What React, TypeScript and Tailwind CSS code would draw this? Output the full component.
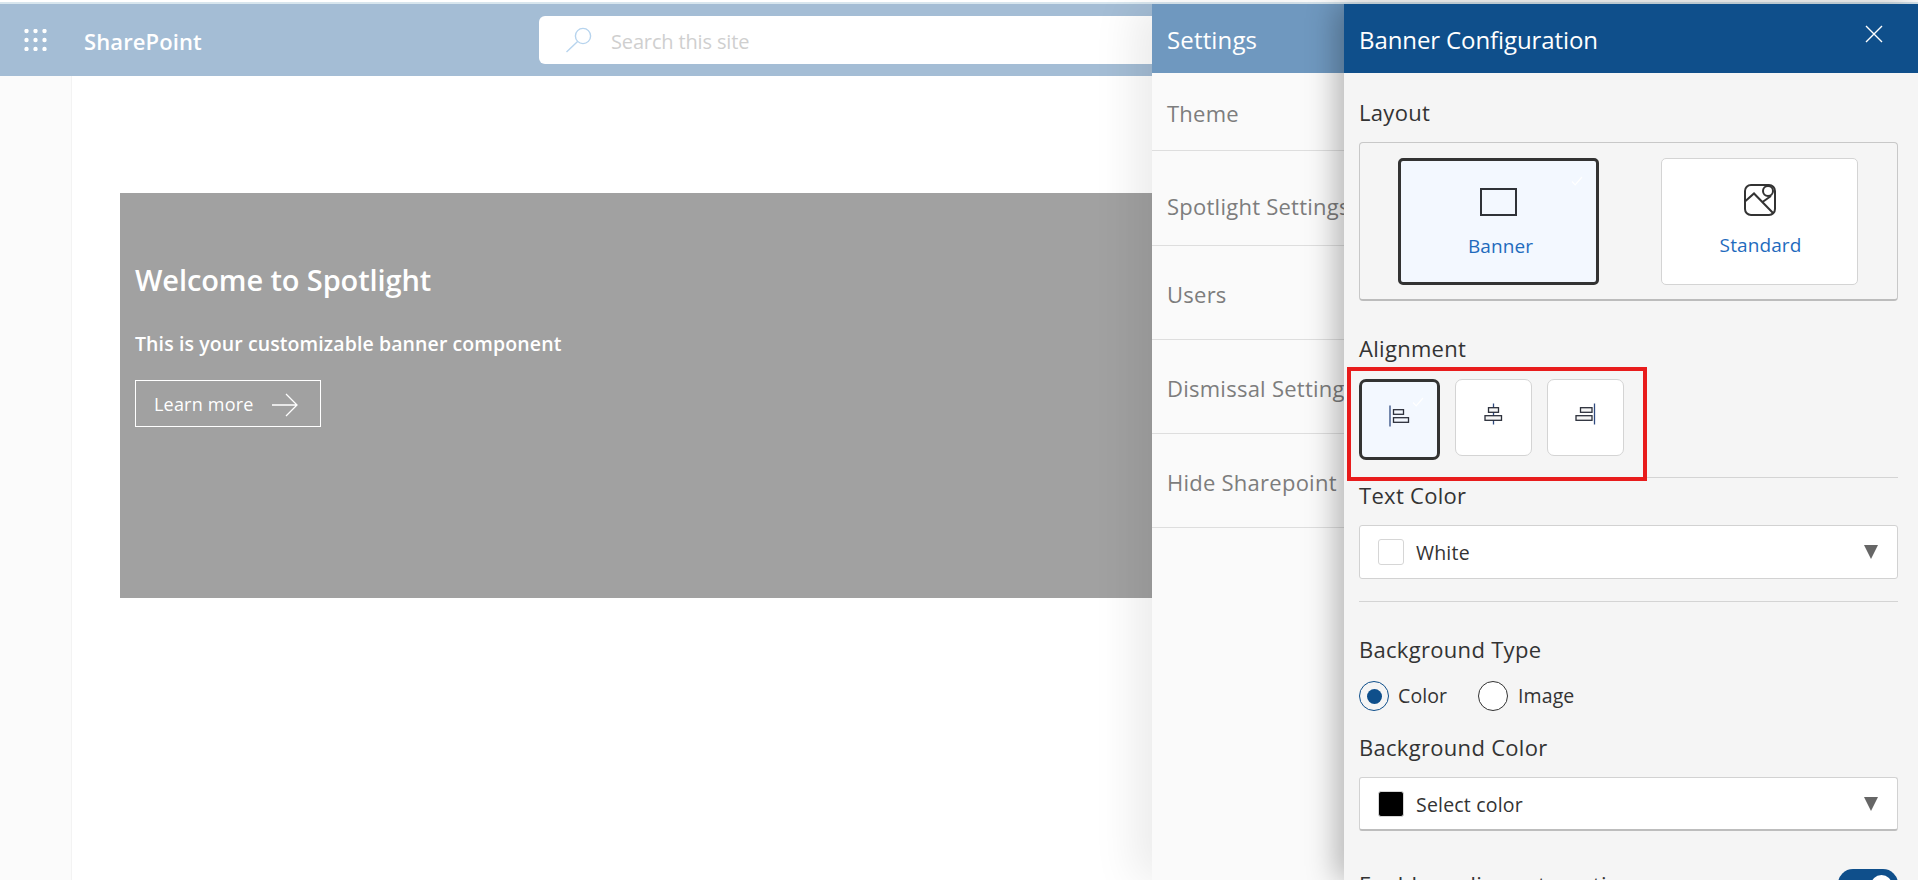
const font = "font-['Open_Sans','Noto_Sans',sans-serif]";

const settingsItems = [
  { label: "Theme", cls: "h-[78px] pt-[4px]" },
  { label: "Spotlight Settings", cls: "h-[95px] pt-[17px]" },
  { label: "Users", cls: "h-[94px] pt-[4px]" },
  { label: "Dismissal Settings", cls: "h-[94px] pt-[4px]" },
  { label: "Hide Sharepoint", cls: "h-[94px] pt-[4px]" },
];

function WaffleIcon() {
  const dots = [2, 11, 20];
  return (
    <svg width="23" height="22" viewBox="0 0 23 22" className="fill-white">
      {dots.map((y) =>
        [2.5, 11.5, 20.5].map((x) => <circle key={`${x}-${y}`} cx={x} cy={y} r="2.2" />)
      )}
    </svg>
  );
}

function SearchIcon() {
  return (
    <svg width="28" height="26" viewBox="0 0 28 26" fill="none" className="stroke-[#b7d4ee]" strokeWidth="1.4">
      <circle cx="18" cy="9" r="7.6" />
      <path d="M12.6 14.6 1.5 25" />
    </svg>
  );
}

function BannerIcon() {
  return <div className="w-[37px] h-[28px] border-2 border-[#2f3238]" />;
}

function StandardIcon() {
  return (
    <svg width="32" height="32" viewBox="0 0 32 32" fill="none" stroke="#333" strokeWidth="2">
      <rect x="1" y="1" width="30" height="30" rx="6" />
      <circle cx="24" cy="7" r="5" />
      <path d="M1.5 17 10 9.5 29 29" />
      <path d="M18.5 18 27 12" />
    </svg>
  );
}

function Check() {
  return (
    <svg width="12" height="10" viewBox="0 0 12 10" fill="none" stroke="#fff" strokeWidth="1.2" className="block">
      <path d="M1 5.5 4.2 8.8 11 1" />
    </svg>
  );
}

function AlignIcon({ variant }: { variant: "left" | "center" | "right" }) {
  const shape =
    variant === "left"
      ? { line: 1, a: [4.5, 10], b: [4.5, 15] }
      : variant === "center"
        ? { line: 10.5, a: [5.5, 10], b: [2, 16.5] }
        : { line: 19.5, a: [5.5, 11.5], b: [1, 16] };
  const fill = variant === "left" ? "#f3f8ff" : "#f6f6f6";
  return (
    <svg width="22" height="22" viewBox="0 0 22 22" fill="none" stroke="#2b2f3a" strokeWidth="1.3" className="mb-[8px]">
      <path d={`M${shape.line} 0.5v21`} stroke="#2f4a80" />
      <rect x={shape.a[0]} y="4.7" width={shape.a[1]} height="4.6" fill={fill} />
      <rect x={shape.b[0]} y="12.7" width={shape.b[1]} height="4.6" fill={fill} />
    </svg>
  );
}

function ColorSelect({ swatch, label, thick }: { swatch: string; label: string; thick?: boolean }) {
  return (
    <div
      className={`h-[54px] bg-white border border-[#d2d2d2] rounded-[3px] flex items-center pl-[18px] pr-[19px] ${
        thick ? "border-b-2 border-b-[#bdbdbd]" : ""
      }`}
    >
      <div className={`w-[26px] h-[26px] rounded-[3px] border border-[#d6d6d6] ${swatch}`} />
      <span className="ml-[12px] pt-[2px] text-[19.5px] text-[#333] flex-1 tracking-[0.2px]">{label}</span>
      <div className="w-0 h-0 border-l-[7px] border-r-[7px] border-t-[14px] border-l-transparent border-r-transparent border-t-[#666]" />
    </div>
  );
}

function PanelLabel({ children, cls }: { children: string; cls: string }) {
  return <div className={`h-[30px] pb-[2px] flex items-center text-[22px] text-[#333] tracking-[0.3px] ${cls}`}>{children}</div>;
}

function ArrowIcon() {
  return (
    <svg width="26" height="24" viewBox="0 0 26 24" fill="none" stroke="#fff" strokeWidth="1.3" className="ml-[18px]">
      <path d="M0 12h25M14 1l11 11-11 11" />
    </svg>
  );
}

export default function App() {
  return (
    <div className={`relative w-full h-[880px] overflow-hidden bg-white ${font}`}>
      <div className="h-[4px] border-t-2 border-[#fff] bg-[#d8e6ee]" />
      <header className="h-[72px] bg-[#a4bdd5] flex items-center">
        <div className="ml-[24px]"><WaffleIcon /></div>
        <span className="ml-[37px] w-[116px] pt-[2px] text-[22px] font-semibold text-white tracking-[0.1px] whitespace-nowrap">SharePoint</span>
        <div className="ml-[339px] flex-1 h-[48px] bg-white rounded-l-[6px] flex items-center pl-[26px]">
          <SearchIcon />
          <span className="ml-[18px] pt-[4px] text-[20px] text-[#cfcfcf] tracking-[-0.15px]">Search this site</span>
        </div>
      </header>

      <div className="flex h-[804px]">
        <aside className="w-[72px] bg-[#fbfbfb] border-r border-[#f3f3f3]" />
        <main className="flex-1 pl-[48px] pt-[117px]">
          <section className="h-[405px] bg-[#a1a1a1] pl-[15px] pt-[68px] text-white">
            <h1 className="text-[29px] leading-[38px] font-semibold tracking-[-0.1px]">Welcome to Spotlight</h1>
            <p className="mt-[32px] text-[19.5px] leading-[26px] font-semibold tracking-[0.1px]">This is your customizable banner component</p>
            <a className="mt-[23px] w-[186px] h-[47px] pt-[2px] border border-white flex items-center pl-[18px] text-[18px] tracking-[0.2px]">
              Learn more
              <ArrowIcon />
            </a>
          </section>
        </main>
      </div>

      <div className="absolute top-[4px] right-0 bottom-0 flex">
        <div className="w-[192px] bg-[#fafafa] shadow-[-18px_0_40px_rgba(0,0,0,0.08)]">
          <div className="h-[69px] pt-[2px] bg-[#6f98bf] flex items-center pl-[15px] text-[24px] text-white tracking-[0.15px]">Settings</div>
          {settingsItems.map((item) => (
            <div
              key={item.label}
              className={`${item.cls} border-b border-[#dedede] flex items-center pl-[15px] text-[22px] text-[#7d7d7d] whitespace-nowrap overflow-hidden tracking-[0.25px]`}
            >
              {item.label}
            </div>
          ))}
        </div>

        <div className="w-[574px] bg-[#f5f5f5] shadow-[-8px_0_28px_rgba(0,0,0,0.28)] z-10 overflow-hidden">
          <div className="relative h-[69px] pt-[2px] bg-[#0f4f8b] flex items-center pl-[15px] text-[24px] text-white tracking-[-0.1px]">
            Banner Configuration
            <svg width="18" height="18" viewBox="0 0 18 18" stroke="#fff" strokeWidth="1.4" className="absolute right-[35px] top-[21px]">
              <path d="M1 1 17 17M17 1 1 17" />
            </svg>
          </div>

          <div className="pl-[15px] pr-[20px]">
            <PanelLabel cls="mt-[25px]">Layout</PanelLabel>
            <div className="mt-[14px] h-[159px] border border-[#c8c8c8] border-b-2 border-b-[#bcbcbc] rounded-[4px] pt-[15px] pl-[38px] flex gap-[62px]">
              <button className="relative w-[201px] h-[127px] border-[3px] border-[#333] rounded-[5px] bg-[#f3f8ff] flex flex-col items-center pt-[27px]">
                <span className="absolute right-[13px] top-[15px]"><Check /></span>
                <BannerIcon />
                <span className="mt-[16px] ml-[4px] text-[19px] text-[#1f6bbd] tracking-[0.1px]">Banner</span>
              </button>
              <button className="w-[197px] h-[127px] border border-[#d4d4d4] rounded-[5px] bg-white flex flex-col items-center pt-[25px]">
                <StandardIcon />
                <span className="mt-[15px] ml-[2px] text-[19px] text-[#1f6bbd] tracking-[0.1px]">Standard</span>
              </button>
            </div>

            <PanelLabel cls="mt-[33px]">Alignment</PanelLabel>
            <div className="mt-[15px] h-[81px] flex gap-[15px]">
              <button className="relative w-[81px] h-[81px] border-[3px] border-[#333] rounded-[7px] bg-[#f3f8ff] flex items-center justify-center">
                <span className="absolute right-[13px] top-[15px]"><Check /></span>
                <AlignIcon variant="left" />
              </button>
              <button className="w-[77px] h-[77px] border border-[#d4d4d4] rounded-[7px] bg-white flex items-center justify-center">
                <AlignIcon variant="center" />
              </button>
              <button className="w-[77px] h-[77px] border border-[#d4d4d4] rounded-[7px] bg-white flex items-center justify-center">
                <AlignIcon variant="right" />
              </button>
            </div>
            <div className="mt-[17px] border-t border-[#d4d4d4]" />

            <PanelLabel cls="mt-[3px]">Text Color</PanelLabel>
            <div className="mt-[14px]"><ColorSelect swatch="bg-white" label="White" /></div>
            <div className="mt-[22px] border-t border-[#d4d4d4]" />

            <PanelLabel cls="mt-[33px]">Background Type</PanelLabel>
            <div className="mt-[16px] h-[30px] flex items-center text-[19.5px] text-[#333] tracking-[0.1px]">
              <span className="w-[30px] h-[30px] rounded-full border border-[#0f4f8b] flex items-center justify-center">
                <span className="w-[15px] h-[15px] rounded-full bg-[#0f4f8b]" />
              </span>
              <span className="ml-[9px] w-[80px]">Color</span>
              <span className="w-[30px] h-[30px] rounded-full border border-[#333] bg-white" />
              <span className="ml-[10px]">Image</span>
            </div>

            <PanelLabel cls="mt-[22px]">Background Color</PanelLabel>
            <div className="mt-[14px]"><ColorSelect swatch="bg-black" label="Select color" thick /></div>

            <div className="mt-[38px] flex items-start justify-between">
              <span className="text-[22px] leading-[30px] text-[#333] tracking-[0.3px]">Enable audience targeting</span>
              <span className="w-[60px] h-[30px] rounded-full bg-[#0f4f8b] flex justify-end pt-[6px] pr-[6px]">
                <span className="w-[21px] h-[21px] rounded-full bg-white" />
              </span>
            </div>
          </div>
        </div>
      </div>

      <div className="absolute left-[1347px] top-[367px] w-[300px] h-[114px] border-[4px] border-[#e81c1c] z-20 pointer-events-none" />
    </div>
  );
}
